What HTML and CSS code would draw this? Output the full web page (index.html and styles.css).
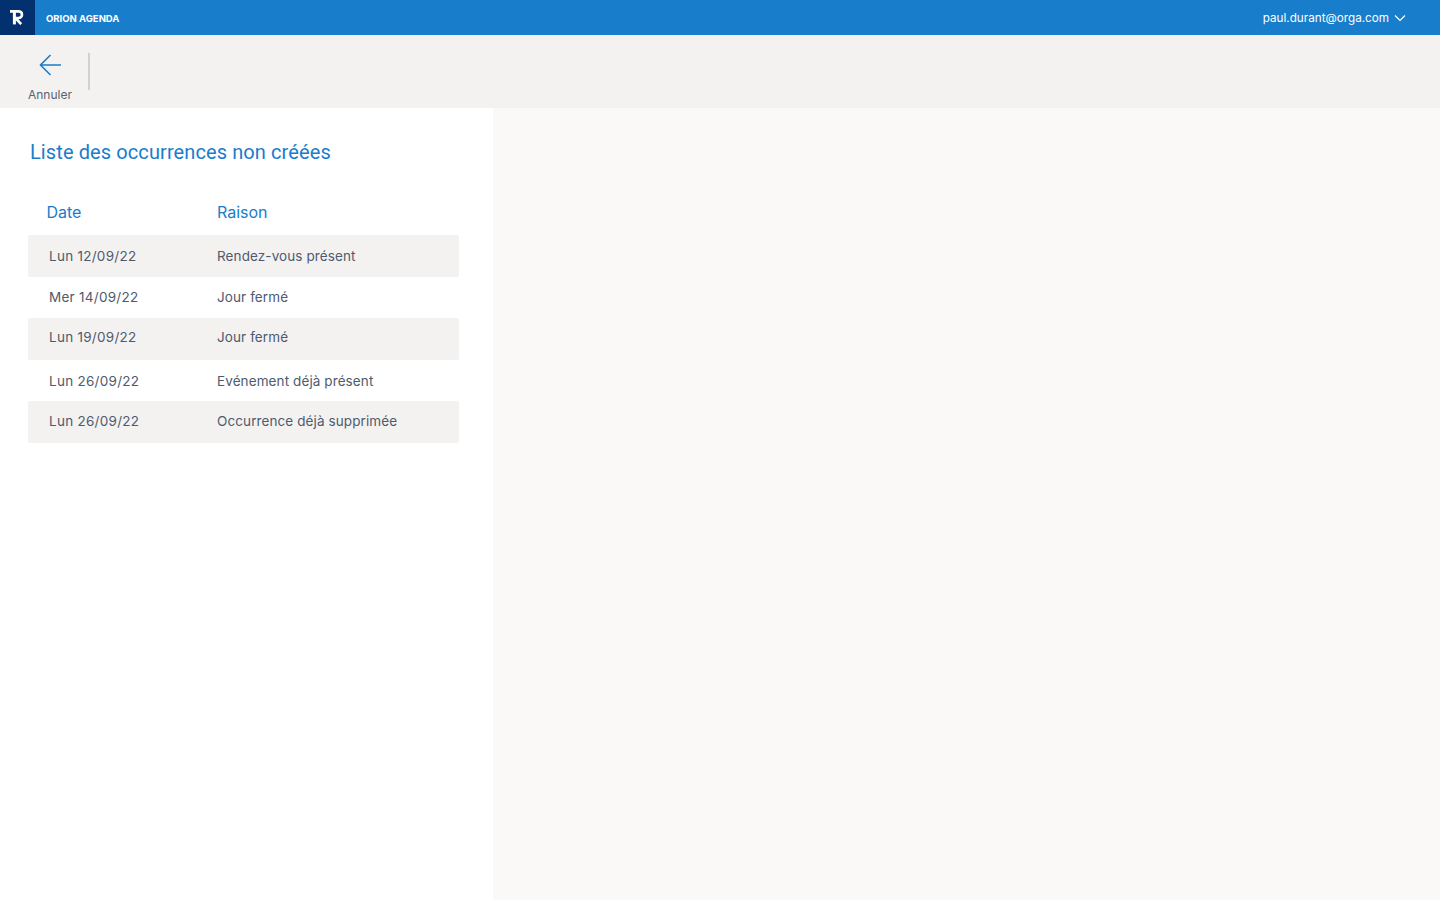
FILE: index.html
```html
<!DOCTYPE html>
<html lang="fr">
<head>
<meta charset="utf-8">
<title>Orion Agenda</title>
<link rel="stylesheet" href="styles.css">
</head>
<body>
<header class="topbar">
  <div class="logo">
    <svg width="15" height="15" viewBox="0 0 15 15" fill="none"><path d="M0 1.4H8.2C10.6 1.4 12 2.9 12 4.7C12 6.6 10.6 8 8.4 8H5.4L11.2 14.2" stroke="#fff" stroke-width="2.6" stroke-linejoin="bevel"/><path d="M4.4 2V14.4" stroke="#fff" stroke-width="3"/></svg>
  </div>
  <div class="app-name">ORION AGENDA</div>
  <div class="user">
    <span>paul.durant@orga.com</span>
    <svg width="12" height="8" viewBox="0 0 12 8" fill="none"><path d="M1 1.5L6 6.5L11 1.5" stroke="#fff" stroke-width="1.2"/></svg>
  </div>
</header>
<div class="toolbar">
  <button class="tool">
    <svg width="24" height="22" viewBox="0 0 24 22" fill="none"><path d="M12.5 1L2.5 11L12.5 21M2.5 11H23" stroke="#1a7dc9" stroke-width="1.6"/></svg>
    <span>Annuler</span>
  </button>
  <div class="sep"></div>
</div>
<main class="content">
  <section class="panel">
    <h1>Liste des occurrences non créées</h1>
    <div class="head"><div class="c1">Date</div><div class="c2">Raison</div></div>
    <div class="row odd"><div class="d">Lun 12/09/22</div><div class="r">Rendez-vous présent</div></div>
    <div class="row"><div class="d">Mer 14/09/22</div><div class="r">Jour fermé</div></div>
    <div class="row odd up2"><div class="d">Lun 19/09/22</div><div class="r">Jour fermé</div></div>
    <div class="row"><div class="d">Lun 26/09/22</div><div class="r">Evénement déjà présent</div></div>
    <div class="row odd up1"><div class="d">Lun 26/09/22</div><div class="r">Occurrence déjà supprimée</div></div>
  </section>
  <aside class="rest"></aside>
</main>
</body>
</html>
```
FILE: styles.css
```css
* { box-sizing: border-box; }
html, body { margin: 0; height: 100%; }
body { font-family: Inter, "Noto Sans", sans-serif; color: #4f5a6e; display: flex; flex-direction: column; height: 900px; overflow: hidden; }
.topbar { height: 35px; background: #187dcb; display: flex; align-items: center; color: #fff; flex: none; }
.logo { width: 35px; height: 35px; background: #03306f; display: flex; align-items: center; justify-content: center; }
.app-name { margin: 2px 0 0 11px; font-size: 9.5px; font-weight: 700; }
.user { margin-left: auto; margin-right: 34px; display: flex; align-items: center; gap: 5px; font-size: 11.7px; padding-top: 1px; }
.toolbar { height: 73px; background: #f3f2f1; display: flex; flex: none; }
.tool { width: 44px; margin-left: 28px; padding: 19px 0 0; border: 0; background: none; font: inherit; font-size: 12px; color: #5a6272; display: flex; flex-direction: column; align-items: center; gap: 11px; white-space: nowrap; }
.sep { width: 2px; height: 37px; margin: 18px 0 0 16px; background: #d2d0ce; }
.content { flex: 1; display: flex; }
.panel { width: 493px; background: #fff; padding: 0 34px 0 28px; }
.rest { flex: 1; background: #faf9f8; }
h1 { margin: 31px 0 0 2px; font: 400 20px/26px Roboto, sans-serif; letter-spacing: .1px; color: #187dcb; }
.head { display: flex; height: 45px; margin-top: 25px; padding-bottom: 2px; align-items: center; font-size: 16px; color: #187dcb; }
.c1 { width: 189px; padding-left: 18.5px; }
.row { display: flex; height: 41.6px; align-items: center; font-size: 13.5px; border-radius: 2px; }
.odd { background: #f3f2f1; }
.up2 { padding-bottom: 3px; }
.up1 { padding-bottom: 2px; }
.d { width: 189px; padding-left: 21px; letter-spacing: .27px; }
.r { letter-spacing: .1px; }
```
